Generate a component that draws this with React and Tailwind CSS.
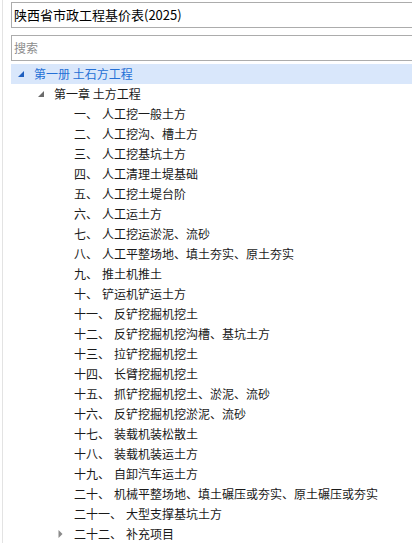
import React from 'react';

const items = [
  '一、 人工挖一般土方',
  '二、 人工挖沟、槽土方',
  '三、 人工挖基坑土方',
  '四、 人工清理土堤基础',
  '五、 人工挖土堤台阶',
  '六、 人工运土方',
  '七、 人工挖运淤泥、流砂',
  '八、 人工平整场地、填土夯实、原土夯实',
  '九、 推土机推土',
  '十、 铲运机铲运土方',
  '十一、 反铲挖掘机挖土',
  '十二、 反铲挖掘机挖沟槽、基坑土方',
  '十三、 拉铲挖掘机挖土',
  '十四、 长臂挖掘机挖土',
  '十五、 抓铲挖掘机挖土、淤泥、流砂',
  '十六、 反铲挖掘机挖淤泥、流砂',
  '十七、 装载机装松散土',
  '十八、 装载机装运土方',
  '十九、 自卸汽车运土方',
  '二十、 机械平整场地、填土碾压或夯实、原土碾压或夯实',
  '二十一、 大型支撑基坑土方',
  '二十二、 补充项目',
];

function Expanded({ color }) {
  return (
    <svg width="6" height="6" viewBox="0 0 6 6" className="shrink-0">
      <polygon points="6,0 6,6 0,6" fill={color} />
    </svg>
  );
}

function Collapsed() {
  return (
    <svg width="5" height="8" viewBox="0 0 5 8" className="shrink-0">
      <polygon points="0.5,0 4.5,4 0.5,8" fill="#8a8a8a" />
    </svg>
  );
}

function Row({ level, icon, children, selected }) {
  const pad = ['pl-[7px]', 'pl-[27px]', 'pl-[47px]'][level];
  return (
    <div className={`flex items-center h-5 ${pad} ${selected ? 'bg-[#d9e7fb]' : ''}`}>
      <div className="w-[16px] flex items-center">{icon}</div>
      <span className={`text-[12px] leading-5 whitespace-nowrap ${selected ? 'text-[#2470d6]' : 'text-[#1a1a1a]'}`}>
        {children}
      </span>
    </div>
  );
}

export default function App() {
  return (
    <div className="w-[412px] h-[543px] overflow-hidden bg-white font-['Microsoft_YaHei','Noto_Sans_CJK_SC',sans-serif]">
      <div className="ml-[2px] h-full border-l border-[#e3e3e3] pl-2 pt-[2px]">
        <div className="h-[26px] w-[430px] border border-[#acacac] flex items-center pl-[2px] text-[13px] text-black">
          陕西省市政工程基价表(2025)
        </div>
        <div className="mt-[7px] h-[26px] w-[430px] border border-[#acacac] flex items-center pl-[2px] text-[12px] text-[#8c8c8c]">
          搜索
        </div>
        <div className="mt-[3px]">
          <Row level={0} selected icon={<Expanded color="#1f5fbf" />}>第一册 土石方工程</Row>
          <Row level={1} icon={<Expanded color="#6b6b6b" />}>第一章 土方工程</Row>
          {items.map((t, i) => {
            const [num, name] = t.split(' ');
            return (
              <Row key={i} level={2} icon={i === items.length - 1 ? <Collapsed /> : null}>
                {num}
                <span className="ml-[4px]">{name}</span>
              </Row>
            );
          })}
        </div>
      </div>
    </div>
  );
}
